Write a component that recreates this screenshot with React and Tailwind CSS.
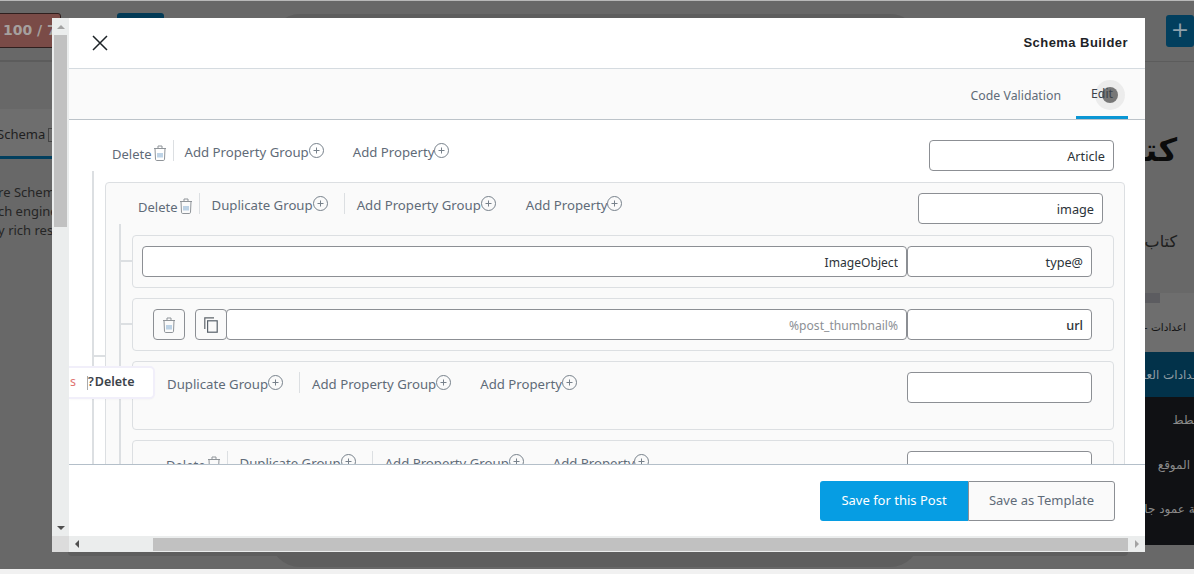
const font = { fontFamily: '"Noto Sans", "Open Sans", sans-serif' };

function TrashIcon({ className = '' }) {
  return (
    <svg viewBox="0 0 12 16" className={`w-[12px] h-[16px] shrink-0 ${className}`} fill="none" stroke="#8f9499" strokeWidth="1">
      <path d="M0 3.5h12" />
      <path d="M4 3.5V1h4v2.5" />
      <path d="M1 3.5l.5 10.8c0 .7.5 1.2 1.2 1.2h6.6c.7 0 1.2-.5 1.2-1.2L11 3.5" />
      <path d="M4 8v4.5M6 8v4.5M8 8v4.5" stroke="#7fa9cf" />
    </svg>
  );
}

function PlusCircle() {
  return (
    <svg viewBox="0 0 15 15" className="w-[15px] h-[15px] shrink-0 mt-[3px]" fill="none" stroke="#77818b" strokeWidth="1">
      <circle cx="7.5" cy="7.5" r="7" />
      <path d="M4.5 7.5h6M7.5 4.5v6" />
    </svg>
  );
}

function CopyIcon() {
  return (
    <svg viewBox="0 0 14 16" className="w-[14px] h-[16px]" fill="none" stroke="#5f656b" strokeWidth="1.2">
      <path d="M.8 12V.8H10" />
      <rect x="3.6" y="3.8" width="9.6" height="11.4" stroke="#59626b" />
    </svg>
  );
}

function Divider() {
  return <span className="block w-px h-[21px] bg-[#dcdfe2] shrink-0" />;
}

function Add({ label, className = '' }) {
  return (
    <span className={`flex items-start shrink-0 ${className}`}>
      <span className="text-[13.2px] leading-[20px] mt-[2px] text-[#5f6b78] whitespace-nowrap">{label}</span>
      <PlusCircle />
    </span>
  );
}

function DeleteAction() {
  return (
    <>
      <span className="text-[13px] leading-[20px] mt-[4px] text-[#5f6b78]">Delete</span>
      <span className="ml-[2px] mt-[5px] shrink-0"><TrashIcon /></span>
    </>
  );
}

function Field({ value = '', wide, muted, className = '' }) {
  return (
    <input
      readOnly
      dir="rtl"
      value={value}
      className={`h-[31px] rounded-[4px] border border-[#8c8f94] bg-white px-2 pt-[1px] outline-none ${muted ? 'text-[#8c8f94]' : 'text-[#2c3338]'} ${wide ? 'flex-1 min-w-0 text-[12.1px]' : 'w-[185px] shrink-0 text-[12.7px]'} ${className}`}
    />
  );
}

function Row({ className = '', connector = 24, children }) {
  return (
    <div className={`relative rounded-[4px] border border-[#dcdfe2] bg-[#fafafa] ${className}`}>
      <span className="absolute left-[-13px] w-[12px] h-[2px] bg-[#dcdfe2]" style={{ top: connector }} />
      {children}
    </div>
  );
}

function Page() {
  return (
    <div className="flex justify-between h-[574px] w-full bg-[#686868] border-t border-b-[5px] border-t-[#b9b9b9] border-b-[#f1f1f1] overflow-hidden">
      <div className="w-[170px] shrink-0">
        <div className="flex items-start gap-[56px] pt-[12px] -ml-[10px] border-b-[2px] border-[#5c5c5c] mb-[47px] h-[61px]">
          <div className="w-[71px] h-[35px] rounded-[3px] bg-[#7a4b47] border border-[#2f1f1e] font-bold text-[#a5a09e] text-[14px] leading-[33px] pl-[12px] whitespace-nowrap" style={{ fontFamily: '"DejaVu Sans", sans-serif' }}>100 / 7</div>
          <div className="w-[47px] h-[20px] rounded-[3px] bg-[#023a56]" />
        </div>
        <div className="w-[52px] h-[50px] pt-[4px] bg-[#6e6e6e] border-b-[3px] border-b-[#023f5e] flex items-center text-[13px] text-[#1f1f1f] overflow-hidden" style={font}>
          <span className="shrink-0 -ml-[3px]">Schema</span>
          <span className="shrink-0 ml-[3px] w-[10px] h-[14px] border border-[#444]" />
        </div>
        <div className="w-[170px] -ml-[27px] mt-[24px] text-[13px] leading-[19px] text-[#252525] whitespace-nowrap" style={font}>
          <p className="-ml-[3px]">Before Schem</p>
          <p className="-ml-[1px]">search engine</p>
          <p className="-ml-[2px]">Many rich results</p>
        </div>
      </div>
      <div className="w-[80px] shrink-0 flex flex-col" style={{ fontFamily: '"DejaVu Sans", sans-serif' }} dir="rtl">
        <div className="h-[61px] border-b border-[#5c5c5c] pt-[14px]">
          <div className="w-[28px] h-[32px] rounded-[3px] bg-[#023f5e] text-[#8fa1ac] text-[22px] leading-[30px] text-center" dir="ltr">+</div>
        </div>
        <div className="h-[120px] pt-[63px] pr-[17px] text-[32px] leading-[50px] font-bold text-[#0b0b0b] whitespace-nowrap">كتاب</div>
        <div className="h-[111px] pt-[48px] pr-[17px] text-[16px] text-[#1e1e1e] whitespace-nowrap">كتاب</div>
        <div className="h-[10px] bg-[#6e6e6e]">
          <div className="h-full bg-[#5c5c60] w-[15px] mr-[34px]" />
        </div>
        <div className="h-[49px] flex items-center pr-[8px] text-[10.5px] text-[#141414] whitespace-nowrap bg-[#6e6e6e]">اعدادات -</div>
        <div className="h-[45px] bg-[#02324a] flex items-center -mr-[16px] text-[12px] text-[#8f9ca3] whitespace-nowrap">الاعدادات العامة</div>
        <div className="h-[148px] bg-[#101114] text-[#8a8a8a] text-[12px] whitespace-nowrap">
          <div className="h-[46px] flex items-center -mr-[14px]">مخطط</div>
          <div className="h-[44px] flex items-center pr-[4px]">الموقع</div>
          <div className="h-[44px] flex items-center -mr-[24px]">اضافة عمود جانبي</div>
        </div>
      </div>
    </div>
  );
}

function Arrow({ points, color }) {
  return (
    <svg viewBox="0 0 8 8" className="w-[8px] h-[8px]" fill={color}>
      <polygon points={points} />
    </svg>
  );
}

function VScrollbar() {
  return (
    <div className="w-[17px] shrink-0 bg-[#ebeded] flex flex-col items-center">
      <span className="h-[17px] flex items-center"><Arrow points="4,2 8,6 0,6" color="#a3a3a3" /></span>
      <span className="w-[13px] h-[192px] bg-[#c1c1c1]" />
      <span className="flex-1" />
      <span className="h-[17px] flex items-center"><Arrow points="0,2 8,2 4,6" color="#505050" /></span>
    </div>
  );
}

function HScrollbar() {
  return (
    <div className="h-[16px] shrink-0 flex items-center bg-[#ebeded]">
      <span className="w-[17px] h-full bg-[#dcdcdc]" />
      <span className="w-[84px] pl-[4px] flex items-center"><Arrow points="6,0 6,8 2,4" color="#505050" /></span>
      <span className="w-[975px] h-[13px] bg-[#c1c1c1]" />
      <span className="flex-1 pl-[5px] flex items-center"><Arrow points="2,0 6,4 2,8" color="#a3a3a3" /></span>
    </div>
  );
}

export default function App() {
  return (
    <div className="relative h-[574px] overflow-hidden" style={font}>
      <Page />

      {/* modal shadow banding */}
      <div className="absolute left-[270px] top-[14px] w-[650px] h-[553px] bg-[#5e5e5e] rounded-[30px]" />
      <div className="absolute left-[68px] top-[548px] w-[1060px] h-[8px] bg-[#5e5e5e] rounded-b-[4px]" />

      <div className="absolute left-[52px] top-[18px] w-[1093px] h-[534px] flex flex-col bg-white">
        <div className="flex flex-1 min-h-0">
          <VScrollbar />
          <div className="flex-1 min-w-0 flex flex-col">
            <div className="h-[51px] shrink-0 flex items-center justify-between pl-[23px] pr-[17px] border-b border-[#d5dbe0]">
              <svg viewBox="0 0 16 16" className="w-[16px] h-[16px]" stroke="#1d2327" strokeWidth="1.5" fill="none">
                <path d="M1 1l14 14M15 1L1 15" />
              </svg>
              <h1 className="text-[13px] font-bold tracking-[0.45px] text-[#1d2327]" style={{ fontFamily: '"Liberation Sans", Arial, sans-serif' }}>Schema Builder</h1>
            </div>

            <div className="h-[51px] shrink-0 flex justify-end bg-[#fafafa] border-b border-[#bcc3c9] pr-[17px]">
              <span className="h-[50px] pt-[4px] flex items-center pr-[15px] text-[12.3px] text-[#5f6b78]">Code Validation</span>
              <span className="relative h-[50px] w-[52px] pt-[4px] flex items-center justify-center border-b-[3px] border-[#0a96d4] text-[12.3px] text-[#3c434a]">
                <span className="absolute left-[19px] top-[11px] w-[30px] h-[30px] rounded-full bg-[#ececec]" />
                <span className="absolute left-[26px] top-[18px] w-[16px] h-[16px] rounded-full bg-[#777]" />
                <span className="relative">Edit</span>
              </span>
            </div>

            <div className="relative flex-1 min-h-0 overflow-hidden">
              <div className="ml-[23px] mr-[20px] pt-[20px]">
                <div className="flex justify-between pl-[20px] pr-[11px] h-[31px]">
                  <div className="flex items-start">
                    <DeleteAction />
                    <span className="ml-[7px] mr-[11px]"><Divider /></span>
                    <Add label="Add Property Group" />
                    <Add label="Add Property" className="ml-[29px]" />
                  </div>
                  <Field value="Article" />
                </div>

                <div className="relative border-l-2 border-[#dcdfe2] pl-[11px] pt-[11px]">
                  <span className="absolute left-0 top-[184px] w-[12px] h-[2px] bg-[#dcdfe2]" />
                  <div className="rounded-[4px] border border-[#dcdfe2] bg-[#fafafa] pt-[10px] pb-[20px]">
                    <div className="flex justify-between pl-[32px] pr-[21px] h-[31px]">
                      <div className="flex items-start">
                        <DeleteAction />
                        <span className="ml-[7px] mr-[12px]"><Divider /></span>
                        <Add label="Duplicate Group" />
                        <span className="ml-[16px] mr-[12px]"><Divider /></span>
                        <Add label="Add Property Group" />
                        <Add label="Add Property" className="ml-[30px]" />
                      </div>
                      <Field value="image" />
                    </div>

                    <div className="ml-[13px] mr-[10px] border-l-2 border-[#dcdfe2] pl-[11px] pt-[11px] flex flex-col gap-[10px]">
                      <Row className="h-[53px]">
                        <div className="flex pl-[9px] pr-[21px] pt-[10px]">
                          <Field wide value="ImageObject" />
                          <Field value="@type" />
                        </div>
                      </Row>

                      <Row className="h-[53px]">
                        <div className="flex items-start pl-[20px] pr-[21px] pt-[10px]">
                          <button className="w-[32px] h-[31px] rounded-[4px] border border-[#8c8f94] flex items-center justify-center"><TrashIcon /></button>
                          <button className="w-[32px] h-[31px] ml-[10px] rounded-[4px] border border-[#8c8f94] flex items-center justify-center"><CopyIcon /></button>
                          <Field wide muted value="%post_thumbnail%" className="-ml-px" />
                          <Field value="url" className="font-medium" />
                        </div>
                      </Row>

                      <Row className="h-[69px]" connector={34}>
                        <div className="flex justify-between pl-[34px] pr-[21px] pt-[10px]">
                          <div className="flex items-start">
                            <Add label="Duplicate Group" />
                            <span className="ml-[16px] mr-[12px]"><Divider /></span>
                            <Add label="Add Property Group" />
                            <Add label="Add Property" className="ml-[29px]" />
                          </div>
                          <Field />
                        </div>
                      </Row>

                      <Row className="h-[60px]">
                        <div className="flex justify-between pl-[33px] pr-[21px] pt-[10px]">
                          <div className="flex items-start">
                            <DeleteAction />
                            <span className="ml-[7px] mr-[12px]"><Divider /></span>
                            <Add label="Duplicate Group" />
                            <span className="ml-[16px] mr-[12px]"><Divider /></span>
                            <Add label="Add Property Group" />
                            <Add label="Add Property" className="ml-[29px]" />
                          </div>
                          <Field />
                        </div>
                      </Row>
                    </div>
                  </div>
                </div>
              </div>

              {/* delete confirm popover */}
              <div className="absolute left-0 top-[248px] w-[84px] h-[29px] bg-white rounded-r-[3px] shadow-[0_0_0_2px_#f1effa,0_1px_3px_rgba(0,0,0,0.12)] flex items-center text-[12.5px] whitespace-nowrap overflow-hidden">
                <span className="text-[#e0736f] font-normal w-[18px] text-left pl-px">s</span>
                <span className="w-px h-[14px] bg-[#aaa]" />
                <span className="text-[#3c434a] font-semibold">?</span>
                <span className="ml-[1px] text-[#3c434a] font-semibold">Delete</span>
              </div>
            </div>

            <div className="h-[72px] shrink-0 flex items-center justify-end pr-[30px] bg-white border-t border-[#b4bfc9]">
              <button className="w-[148px] h-[40px] rounded-l-[3px] bg-[#069de3] text-white text-[13px]">Save for this Post</button>
              <button className="w-[147px] h-[40px] rounded-r-[3px] border border-[#8c8f94] bg-[#fafafa] text-[#5f6b78] text-[13px]">Save as Template</button>
            </div>
          </div>
        </div>
        <HScrollbar />
      </div>
    </div>
  );
}
